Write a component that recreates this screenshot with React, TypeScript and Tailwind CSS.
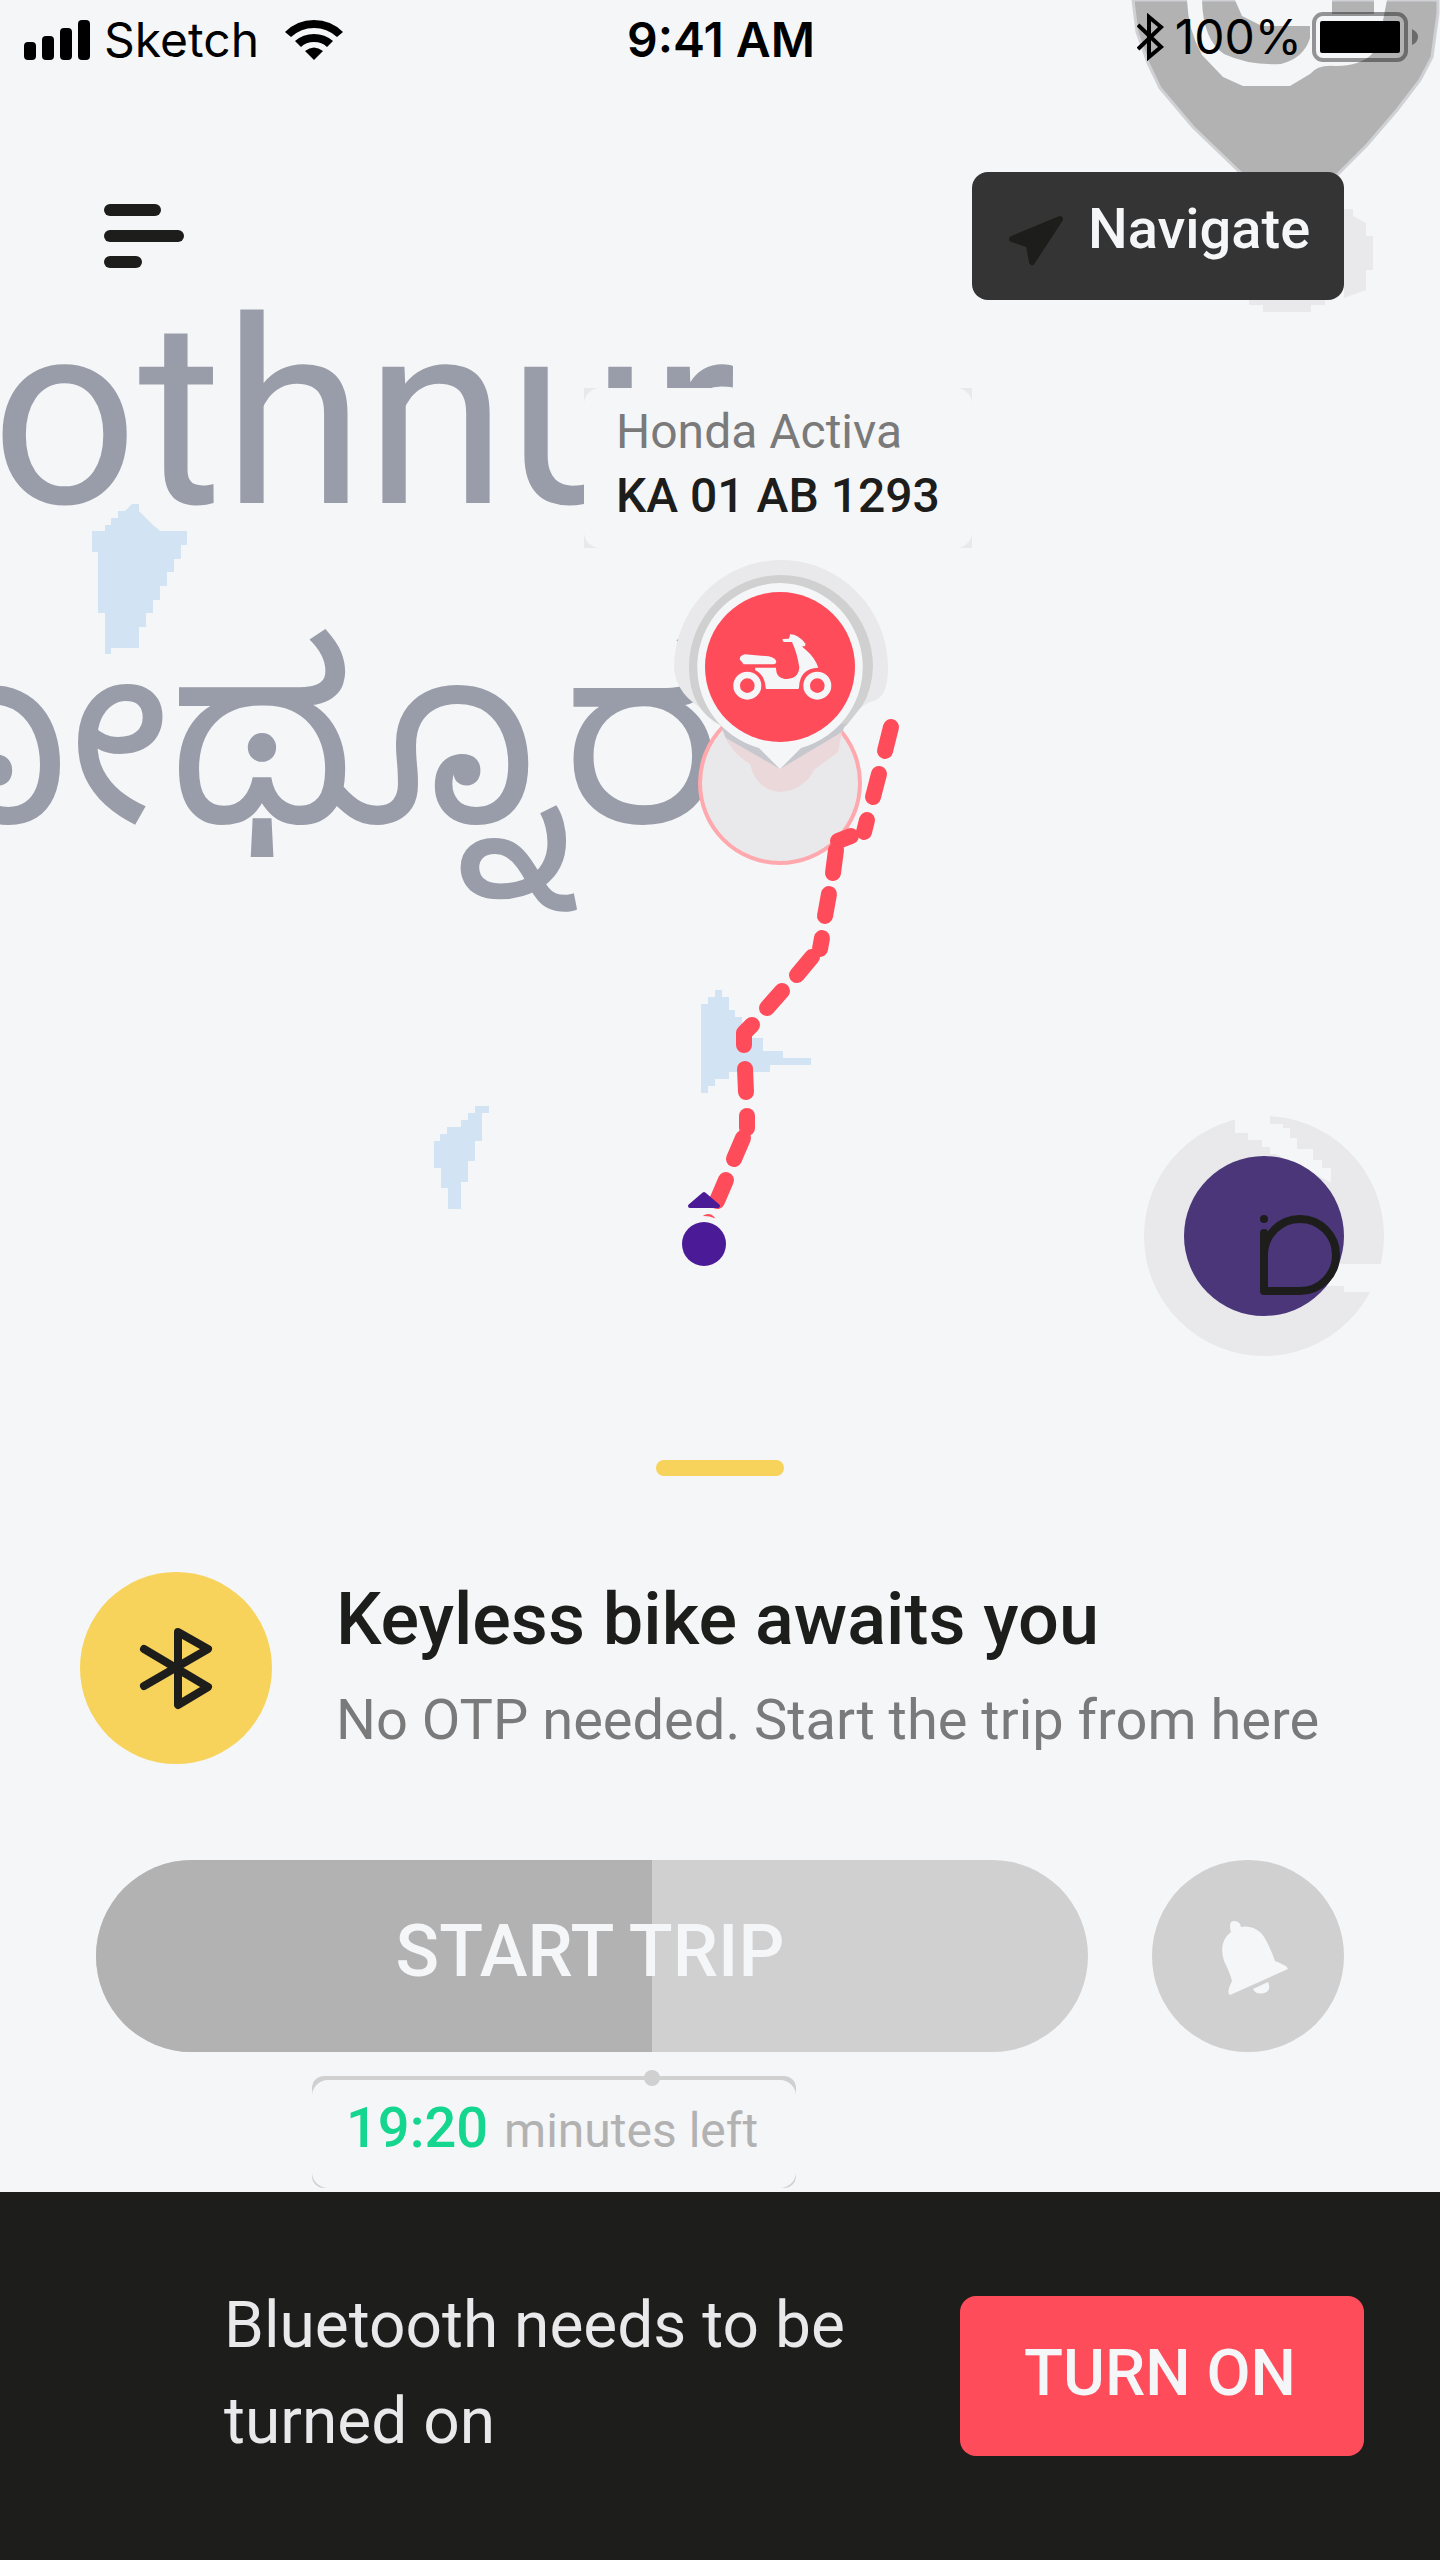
interface LineProps {
  points: number[];
}

const routeDashes = [
  "891,727 885,751",
  "879,774 873,797",
  "867,820 864,832",
  "851,836 838,841",
  "836,850 833,873",
  "829,894 825,916",
  "822,938 820,949",
  "812,957 797,975",
  "782,991 767,1008",
  "752,1025 744,1033 744,1045",
  "745,1069 746,1092",
  "747,1116 747,1128",
  "743,1138 734,1159",
  "726,1180 717,1201",
  "708,1222 706,1226",
];

const SignalBars = () => (
  <svg className="w-[66px] h-10" viewBox="0 0 66 40" aria-hidden="true">
    <rect x="0" y="22" width="12" height="18" rx="4" />
    <rect x="18" y="16" width="12" height="24" rx="4" />
    <rect x="36" y="8" width="12" height="32" rx="4" />
    <rect x="54" y="0" width="12" height="40" rx="4" />
  </svg>
);

const WifiIcon = () => (
  <svg className="w-[58px] h-10" viewBox="0 0 58 40" aria-hidden="true">
    <path d="M0 12 Q12 0 29 0 Q46 0 58 12 L52 17 Q42 8 29 8 Q16 8 6 17 Z" />
    <path d="M10 21 Q18 14 29 14 Q40 14 48 21 L42 27 Q37 22 29 22 Q21 22 16 27 Z" />
    <path d="M20 31 Q29 24 38 31 L29 40 Z" />
  </svg>
);

const StatusBluetooth = () => (
  <svg className="w-7 h-12" viewBox="0 0 28 48" fill="none" stroke="black" strokeWidth="4" aria-hidden="true">
    <path d="M1 12 L24 34 L12 44 V4 L24 14 L1 36" />
  </svg>
);

const Battery = () => (
  <svg className="w-[106px] h-[50px]" viewBox="0 0 106 50" aria-hidden="true">
    <rect x="2" y="2" width="92" height="46" rx="9" fill="none" stroke="black" strokeOpacity="0.4" strokeWidth="4" />
    <rect x="8" y="9" width="80" height="32" rx="2" />
    <path d="M100 17 Q106 20 106 25 Q106 30 100 33 Z" fillOpacity="0.4" />
  </svg>
);

const StatusBar = () => (
  <div className="relative grid grid-cols-3 items-center h-20 pl-6 pr-[22px] font-['Inter',sans-serif] text-[48px] leading-none text-black">
    <div className="flex items-center gap-3.5">
      <SignalBars />
      <span>Sketch</span>
      <span className="pl-3">
        <WifiIcon />
      </span>
    </div>
    <span className="text-center font-semibold">9:41 AM</span>
    <div className="flex items-center justify-end gap-2.5 pb-1.5">
      <StatusBluetooth />
      <span>100%</span>
      <Battery />
    </div>
  </div>
);

const Water = ({ points }: LineProps) => {
  const pairs: string[] = [];
  for (let i = 0; i < points.length; i += 2) {
    pairs.push(`${points[i]},${points[i + 1]}`);
  }
  return <polygon points={pairs.join(" ")} fill="#d2e3f3" />;
};

const Scooter = () => (
  <g transform="translate(560 370) scale(0.3333)" fill="#f5f6f8">
    <circle cx="562" cy="947" r="32" fill="none" stroke="#f5f6f8" strokeWidth="20" />
    <circle cx="772" cy="947" r="32" fill="none" stroke="#f5f6f8" strokeWidth="20" />
    <path d="M555 853 L626 859 Q648 864 649 876 Q648 883 640 883 H551 L540 869 Q537 857 555 853 Z" />
    <path d="M586 893 H648 Q648 927 682 927 Q716 925 718 892 Q712 850 696 816 H672 Q666 812 668 807 L686 806 Q690 803 690 793 Q715 793 737 822 L734 829 H726 Q728 833 738 840 Q765 863 775 893 Q718 895 717 954 Q717 957 713 957 H620 Q617 957 617 953 Q615 915 585 900 Z" />
  </g>
);

// Decorative map: labels, lakes, route and pins on a 1440px wide canvas
const MapCanvas = () => (
  <svg
    className="absolute top-0 left-1/2 -translate-x-1/2 w-[1440px] h-[1400px]"
    viewBox="0 0 1440 1400"
    role="img"
    aria-label="Map with the route to your bike"
  >
    {/* place of interest, top right */}
    <path
      d="M1133 0 L1137 32 L1148 63 L1160 88 L1193 127 L1243 175 H1337 L1367 145 L1397 110 L1420 80 L1432 57 L1438 13 V0 Z"
      fill="#b2b2b2"
      stroke="#d0d1d4"
      strokeWidth="3"
    />
    <path
      d="M1187 0 H1202 Q1203 40 1224 54 Q1250 66 1281 64 Q1304 58 1310 38 V0 H1332 V14 H1374 V0 H1387 L1380 36 L1372 54 Q1360 66 1336 66 Q1318 64 1310 74 L1290 86 H1243 L1223 77 L1202 55 Q1188 30 1187 0 Z"
      fill="#f5f6f8"
    />
    <path d="M1235 0 H1332 V14 L1312 26 H1262 L1242 16 Z" fill="#f5f6f8" />
    <path
      d="M1344 209 H1353 V216 L1366 223 V236 H1373 V270 H1366 V290 L1344 298 Z M1249 300 H1325 V305 H1311 V312 H1263 V305 H1249 Z"
      fill="#e9e9eb"
    />

    {/* lakes */}
    <Water
      points={[
        92, 531, 105, 531, 105, 525, 111, 525, 111, 518, 118, 518, 118, 511, 125, 511, 132, 504, 139, 504, 139, 511,
        146, 518, 153, 525, 160, 531, 187, 531, 187, 545, 181, 545, 181, 559, 174, 559, 174, 572, 167, 572, 167, 586,
        160, 586, 160, 600, 153, 600, 153, 613, 146, 613, 146, 627, 139, 627, 139, 648, 111, 648, 111, 654, 105, 654,
        105, 613, 98, 613, 98, 552, 92, 552,
      ]}
    />
    <Water
      points={[
        701, 1004, 708, 1004, 708, 997, 715, 997, 715, 990, 722, 990, 722, 997, 729, 997, 729, 1010, 735, 1010, 735,
        1017, 742, 1017, 742, 1024, 749, 1024, 749, 1038, 763, 1038, 763, 1051, 783, 1051, 783, 1058, 811, 1058, 811,
        1065, 770, 1065, 770, 1072, 729, 1072, 729, 1079, 715, 1079, 715, 1086, 708, 1086, 708, 1093, 701, 1093,
      ]}
    />
    <Water
      points={[
        475, 1106, 489, 1106, 489, 1113, 482, 1113, 482, 1141, 475, 1141, 475, 1161, 468, 1161, 468, 1182, 461, 1182,
        461, 1209, 448, 1209, 448, 1188, 441, 1188, 441, 1168, 434, 1168, 434, 1141, 440, 1141, 440, 1134, 447, 1134,
        447, 1127, 461, 1127, 461, 1120, 468, 1120, 468, 1113, 475, 1113,
      ]}
    />

    {/* place name in English and Kannada */}
    <text x="-9" y="503" className="font-['Roboto',sans-serif] text-[258px]" fill="#989da9">
      othnur
    </text>
    <text
      x="722"
      y="822"
      textAnchor="end"
      className="font-['Noto_Sans_Kannada','Noto_Sans',sans-serif] text-[244px]"
      fill="#989da9"
    >
      ಕೋಥ್ನೂರ
    </text>

    {/* bike position and its accuracy circle */}
    <circle cx="780" cy="783" r="80" fill="#e9e9eb" stroke="#ffa8ae" strokeWidth="4" />
    <path d="M722 730 Q730 752 750 764 Q756 790 780 792 Q804 790 814 770 L838 752 L842 732 Z" fill="#ebd8db" />
    <path d="M674 668 A107 108 0 0 1 888 668 Q888 700 870 702 L852 712 H708 Q676 696 674 668 Z" fill="#e9e9eb" />
    <path d="M689 667 A92 92 0 0 1 873 667 Q872 690 862 706 L846 726 H722 Q689 710 689 667 Z" fill="#d0d0d0" />
    <path d="M720 724 L726 738 L780 769 L842 732 L846 724 Z" fill="#c6c8ce" />
    <path d="M780 583 A84 84 0 0 1 801 748 L780 769 L759 748 A84 84 0 0 1 780 583 Z" fill="#f5f6f8" />
    <circle cx="780" cy="667" r="75" fill="#ff4c5b" />
    <Scooter />

    {/* walking route */}
    <g fill="none" stroke="#ff4c5b" strokeWidth="16" strokeLinecap="round" strokeLinejoin="round">
      {routeDashes.map((points) => (
        <polyline key={points} points={points} />
      ))}
    </g>

    {/* rider position */}
    <circle cx="704" cy="1244" r="28" fill="#f5f6f8" />
    <circle cx="704" cy="1244" r="22" fill="#4b1a96" />
    <path d="M704 1194 L718 1206 H690 Z" fill="#4b1a96" stroke="#4b1a96" strokeWidth="4" strokeLinejoin="round" />
  </svg>
);

const BikeLabel = () => (
  <div className="absolute top-[388px] left-1/2 -translate-x-[136px] w-[388px] bg-[#e9e9eb]">
    <div className="rounded-2xl bg-[#f5f6f8] pt-3 pb-5 pl-8 text-[48px] leading-[64px]">
      <p className="text-[#7a7a7a]">Honda Activa</p>
      <p className="font-medium text-[#1d1d1b]">KA 01 AB 1293</p>
    </div>
  </div>
);

const MapHeader = () => (
  <header className="relative flex items-center justify-between px-24 pt-[92px]">
    <button type="button" aria-label="Menu" className="pl-2">
      <svg className="w-20 h-16" viewBox="0 0 80 64" fill="#1d1d1b" aria-hidden="true">
        <rect x="0" y="0" width="57" height="12" rx="6" />
        <rect x="0" y="26" width="80" height="12" rx="6" />
        <rect x="0" y="52" width="38" height="12" rx="6" />
      </svg>
    </button>
    <button
      type="button"
      className="flex items-center gap-6 h-32 w-[372px] pl-9 rounded-2xl bg-[#343434] text-[56px] leading-[80px] font-medium text-[#f5f6f8]"
    >
      <svg
        className="w-14 h-14 mt-2"
        viewBox="0 0 56 56"
        fill="#1d1d1b"
        stroke="#1d1d1b"
        strokeWidth="6"
        strokeLinejoin="round"
        aria-hidden="true"
      >
        <path d="M52 7 L24 50 L21 33 L4 27 Z" />
      </svg>
      <span className="pb-3.5">Navigate</span>
    </button>
  </header>
);

const HelpButton = () => (
  <button type="button" aria-label="Help" className="relative self-end w-40 h-40 mr-24 mb-24 mt-[856px]">
    <svg className="absolute -inset-10 w-60 h-60" viewBox="0 0 240 240" aria-hidden="true">
      <circle cx="120" cy="120" r="120" fill="#e9e9eb" />
      <path
        d="M91 0 V17 H104 V24 H118 V31 H126 V38 H132 L186 66 H187 V52 H178 V44 H169 V33 H153 V22 H146 V12 H139 V8 H126 V0 Z"
        fill="#f5f6f8"
      />
      <path d="M190 148 H240 V176 H200 V170 H180 Z" fill="#f5f6f8" />
      <circle cx="120" cy="120" r="80" fill="#4a3679" />
      <path
        d="M120 117 V175 H156 A36 36 0 1 0 120 139"
        fill="none"
        stroke="#1d1d1b"
        strokeWidth="8"
        strokeLinecap="round"
        strokeLinejoin="round"
      />
      <circle cx="120" cy="103" r="4" fill="#1d1d1b" />
    </svg>
  </button>
);

const BluetoothBadge = () => (
  <div className="flex items-center justify-center shrink-0 w-48 h-48 rounded-full bg-[#f7d35b]">
    <svg
      className="w-24 h-24"
      viewBox="0 0 96 96"
      fill="none"
      stroke="#1d1d1b"
      strokeWidth="8"
      strokeLinecap="round"
      strokeLinejoin="round"
      aria-hidden="true"
    >
      <path d="M16 29 L80 67 L50 85 V12 L80 29 L16 66" />
    </svg>
  </div>
);

const BellIcon = () => (
  <svg className="w-24 h-24" viewBox="0 0 96 96" fill="#f5f6f8" aria-hidden="true">
    <path d="M31 24 Q28 13 34 13 Q40 13 41 19 Q52 17 61 25 Q67 31 75 53 Q88 58 88 61 L30 87 Q26 85 32 73 Q30 65 24 53 Q18 34 31 24 Z" />
    <path d="M53 81 L68 74 Q72 83 64 85 Q56 87 53 81 Z" />
  </svg>
);

const TripSheet = () => (
  <section className="relative bg-[#f5f6f8] px-24 pt-12 pb-1">
    <div className="mx-auto w-32 h-4 rounded-full bg-[#f7d35b]" />

    <div className="flex gap-16 mt-24 -ml-4">
      <BluetoothBadge />
      <div>
        <h1 className="text-[72px] leading-[96px] font-medium text-[#1d1d1b]">Keyless bike awaits you</h1>
        <p className="mt-1 text-[56px] leading-[96px] text-[#7a7a7a]">No OTP needed. Start the trip from here</p>
      </div>
    </div>

    <div className="flex gap-16 mt-[92px]">
      <button
        type="button"
        className="relative flex-1 h-48 overflow-hidden rounded-full bg-[#d0d0d0] text-[72px] leading-[96px] font-medium text-[#f5f6f8]"
      >
        <span className="absolute inset-y-0 left-0 w-[556px] bg-[#b2b2b2]" />
        <span className="relative block pb-2 pr-1">START TRIP</span>
      </button>
      <button
        type="button"
        aria-label="Ring the bike"
        className="flex items-center justify-center shrink-0 w-48 h-48 rounded-full bg-[#d0d0d0]"
      >
        <BellIcon />
      </button>
    </div>

    <div className="relative mt-6 ml-[216px] w-[484px] pt-1 rounded-xl bg-[#d0d0d0]">
      <span className="absolute -top-1.5 left-[332px] w-4 h-4 rounded-full bg-[#d0d0d0]" />
      <p className="flex items-baseline gap-4 h-[108px] pl-[34px] pt-2 rounded-2xl bg-[#f5f6f8] leading-[80px]">
        <span className="text-[56px] font-medium text-[#14d68f]">19:20</span>
        <span className="text-[48px] text-[#b2b2b2]">minutes left</span>
      </p>
    </div>
  </section>
);

const BluetoothPrompt = () => (
  <footer className="flex items-center justify-between min-h-[368px] pl-56 pr-19 bg-[#1d1d1b]">
    <p className="w-[660px] pb-1 text-[64px] leading-[96px] text-[#e9e9eb]">Bluetooth needs to be turned on</p>
    <button
      type="button"
      className="h-40 w-[404px] shrink-0 pb-1 pr-1 rounded-2xl bg-[#ff4c5b] text-[64px] leading-[96px] font-medium text-[#f5f6f8]"
    >
      TURN ON
    </button>
  </footer>
);

export default function App() {
  return (
    <div className="flex flex-col min-h-screen bg-[#f5f6f8] font-['Roboto',sans-serif]">
      <main className="relative flex flex-col flex-1 overflow-hidden">
        <MapCanvas />
        <BikeLabel />
        <StatusBar />
        <MapHeader />
        <HelpButton />
      </main>
      <TripSheet />
      <BluetoothPrompt />
    </div>
  );
}
